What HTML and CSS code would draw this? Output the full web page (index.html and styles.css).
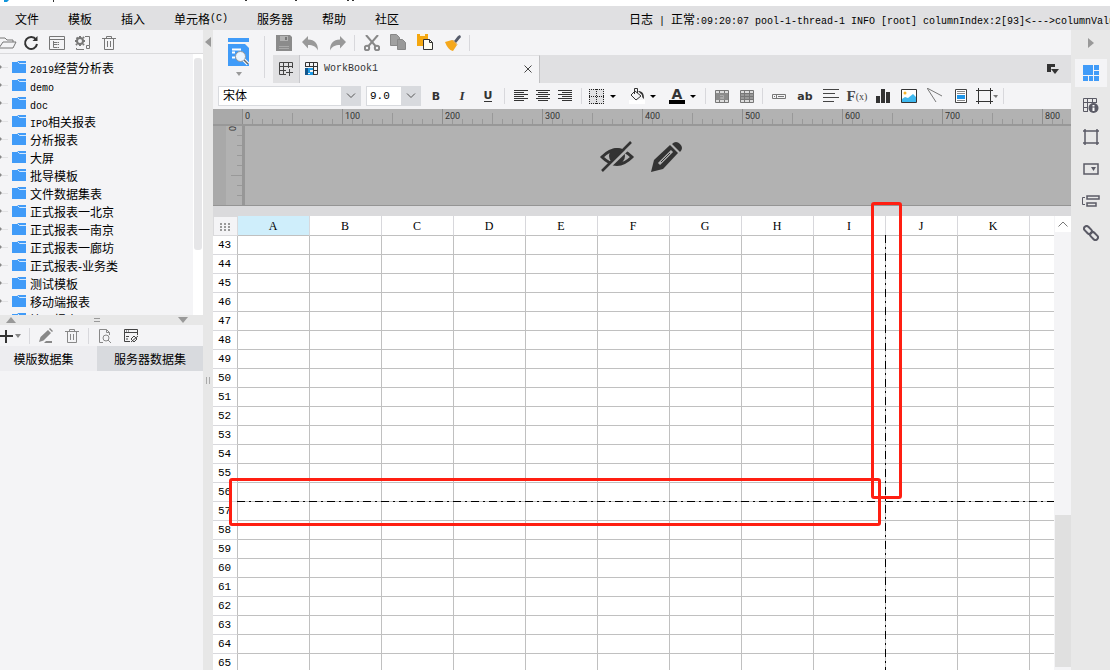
FILE: index.html
```html
<!DOCTYPE html>
<html lang="zh-CN">
<head>
<meta charset="utf-8">
<title>WorkBook1</title>
<link rel="stylesheet" href="styles.css">
</head>
<body>
<div class="app">
  <div class="titlebar">
    <svg width="400" height="3" aria-hidden="true"><path d="M4 0h5l-2 2H4z" fill="#1296db"/><path d="M53 0h1v2h-1zM245 0h2v1h-2zM295 0h2v1h-2zM347 0h2v1h-2zM352 0h2v1h-2z" fill="#333"/></svg>
  </div>
  <header class="menubar">
    <nav class="menus">
      <button>文件</button><button>模板</button><button>插入</button><button>单元格<span class="latin">(C)</span></button><button>服务器</button><button>帮助</button><button>社区</button>
    </nav>
    <div class="log">日志<span class="latin"> | </span>正常<span class="latin">:09:20:07 pool-1-thread-1 INFO [root] columnIndex:2[93]&lt;---&gt;columnValue</span></div>
  </header>

  <div class="body">
    <aside class="left">
      <div class="bar file-bar">
        <button aria-label="打开"><svg width="20" height="16" fill="none" stroke="#777"><path d="M1 13V3h6l2 2h6v2M1 13l4-6h13l-3 6z"/></svg></button>
        <button aria-label="刷新"><svg width="16" height="16" fill="none" stroke="#333" stroke-width="2"><path d="M13 4.500A6 6 0 1 0 14 9"/><path d="M14.500 1v5h-5z" fill="#333" stroke="none"/></svg></button>
        <button aria-label="目录"><svg width="18" height="16" fill="none" stroke="#777"><path d="M1.500 1.500h15v13h-15zM1.500 4.500h15M5.500 6v6.500M5.500 7.500h4M5.500 9.500h4M5.500 12.500h4M10 7.500h1M10 9.500h1M10 12.500h1"/></svg></button>
        <button aria-label="设置"><svg width="18" height="16" fill="none" stroke="#777"><circle cx="6" cy="6" r="3" stroke-width="2"/><path d="M6 1v2M6 9v2M1 6h2M9 6h2M2.500 2.500l1 1M9 9l1 1M9 3l1-1M2 10l1-1" stroke-width="2"/><path d="M11 1.500h4.500v9M2.500 13v1.500H10M12.500 10.500h3v3h-3z"/></svg></button>
        <button aria-label="删除"><svg width="16" height="16" fill="none" stroke="#777"><path d="M1 3.500h14M5.500 3V1.500h5V3M3.500 4v10.500h9V4M6.500 6v6M9.500 6v6"/></svg></button>
      </div>
      <div class="tree-wrap">
        <ul class="tree" id="tree"></ul>
        <div class="tree-scroll"><div class="tree-thumb"></div></div>
      </div>
      <div class="splitter">
        <svg width="10" height="6"><path d="M0 6l5-6 5 6z" fill="#999"/></svg>
        <svg width="6" height="4"><path d="M0 .5h6M0 3.500h6" stroke="#999"/></svg>
        <svg width="10" height="6"><path d="M0 0h10L5 6z" fill="#999"/></svg>
      </div>
      <div class="bar data-bar">
        <button aria-label="新增"><svg width="22" height="16"><path d="M0 8h13M6 2v13" stroke="#333" stroke-width="2"/><path d="M15 6h6l-3 4z" fill="#888"/></svg></button>
        <i class="sep"></i>
        <button aria-label="编辑"><svg width="16" height="16"><path d="M1 14l1.500-5L10 2l3 3-7.500 7.500zM11 1l1-1 3 3-1 1zM8 13h6v2H6z" fill="#888"/></svg></button>
        <button aria-label="删除数据集"><svg width="16" height="16" fill="none" stroke="#888"><path d="M1 3.500h14M5.500 3V1.500h5V3M3.500 4v10.500h9V4M6.500 6v6M9.500 6v6"/></svg></button>
        <i class="sep"></i>
        <button aria-label="预览"><svg width="16" height="16" fill="none" stroke="#888"><path d="M6 14.500H2.500v-13h7l3 3V7M9.500 1.500v3h3"/><circle cx="9" cy="10" r="3"/><path d="M11 12l3 3"/></svg></button>
        <button aria-label="连接"><svg width="16" height="16" fill="none" stroke="#444"><path d="M7 13.500H1.500v-12h13V7M1.500 4.500h13M3 8.500h3M3 11h2M3 3h1M5 3h1"/><path d="M8 11l3-3 3 3-3 3zM8 14l7-6"/></svg></button>
      </div>
      <div class="data-tabs"><button>模版数据集</button><button class="chosen">服务器数据集</button></div>
    </aside>

    <div class="divider">
      <svg width="6" height="10"><path d="M6 0v10L0 5z" fill="#999"/></svg>
      <svg width="4" height="7"><path d="M.5 0v7M3.500 0v7" stroke="#aaa"/></svg>
    </div>

    <main class="main">
      <div class="top">
        <button class="preview-btn" aria-label="预览模板">
          <svg width="22" height="28"><path d="M0 0h21v4H0zM0 6h17l4 4v18H0z" fill="#409bf8"/><path d="M4 11.500h9M4 14.500h3M4 19.500h3" stroke="#fff" stroke-width="2"/><circle cx="12.500" cy="18.500" r="5" fill="#eaf4ff" stroke="#999"/><path d="M16 22l4 4" stroke="#fff" stroke-width="3.500"/><path d="M16 22l4 4" stroke="#666" stroke-width="1.500"/></svg>
          <svg width="6" height="4"><path d="M0 0h6L3 4z" fill="#999"/></svg>
        </button>
        <div class="top-right">
          <div class="edit-bar">
            <button aria-label="保存"><svg width="16" height="16"><path d="M0 0h14l2 2v14H0z" fill="#8b8b8b"/><path d="M4 1h8v5H4z" fill="#b2b2b2"/><path d="M9 2h2v3H9z" fill="#777"/><path d="M3 11.500h10M3 13.500h10" stroke="#aaa"/></svg></button>
            <button aria-label="撤销"><svg width="17" height="16"><path d="M6 1v3.500c7 0 10 4 10 11-2-4-5-5.500-10-5.500v3.500L0 7z" fill="#999"/></svg></button>
            <button aria-label="重做"><svg width="17" height="16"><path d="M11 1v3.500C4 4.500 1 8.500 1 15.500c2-4 5-5.500 10-5.500v3.500L17 7z" fill="#999"/></svg></button>
            <i class="sep"></i>
            <button aria-label="剪切"><svg width="16" height="16" fill="none" stroke="#888" stroke-width="2"><circle cx="3" cy="13" r="2.200"/><circle cx="13" cy="13" r="2.200"/><path d="M2 0l9.500 11M14 0L4.500 11"/></svg></button>
            <button aria-label="复制"><svg width="17" height="17" stroke="#888"><path d="M.5.5h6l3 3v8h-9z" fill="#a0a0a0"/><path d="M7.500 5.500h5l3 3v7h-8z" fill="#999"/></svg></button>
            <button aria-label="粘贴"><svg width="17" height="17"><path d="M0 0h11v12H0z" fill="#f5a70f"/><path d="M3 0h5v2H3z" fill="#fff3d8"/><path d="M6.500 5.500h6l3 3v7h-9z" fill="#fffdf2" stroke="#333"/><path d="M12.500 5.500v3h3" fill="none" stroke="#333"/></svg></button>
            <button aria-label="格式刷"><svg width="16" height="16"><path d="M9 6l4-5 2-1 1 2-5 6z" fill="#555b6b"/><path d="M0 7l7-2 5 5-4 6c-4-1-6-4-8-9z" fill="#f5a81c"/><path d="M7.500 5l4.500 4.500" stroke="#d98a10"/></svg></button>
            <i class="sep"></i>
          </div>
          <div class="tabs">
            <button class="new-tab" aria-label="新建"><svg width="15" height="14" fill="none" stroke="#444"><path d="M13.500 6V.5H.5v12H7M.5 4.500h13M.5 8.500H7M4.500.5v12M9.500.5V6M10.500 7v7M7 10.500h7"/></svg></button>
            <div class="tab">
              <svg width="14" height="14"><path d="M.5 5V.5h12v12H8M.5 4.500h12M8 8.500h4.500M4.500.5v4M8.500.5v12" fill="none" stroke="#333"/><path d="M0 6h3v7H0z" fill="#14568c"/><path d="M3 6h5v2H5v2h3v3H3v-1h2v-1H3z" fill="#1c9be6"/></svg>
              <span class="tab-name">WorkBook1</span>
              <button aria-label="关闭"><svg width="8" height="8"><path d="M.5.5l7 7M7.500.5l-7 7" stroke="#444"/></svg></button>
            </div>
            <button class="tab-list" aria-label="标签列表"><svg width="12" height="10"><path d="M0 0h8v3H4v5H0z" fill="#333"/><path d="M4 5h8L8 10z" fill="#333"/></svg></button>
          </div>
        </div>
      </div>

      <div class="format-bar">
        <div class="combo font-combo"><select aria-label="字体"><option>宋体</option></select><svg width="10" height="6" fill="none" stroke="#555"><path d="M1 .5l4 4 4-4"/></svg></div>
        <div class="combo size-combo"><select aria-label="字号"><option>9.0</option></select><svg width="10" height="6" fill="none" stroke="#555"><path d="M1 .5l4 4 4-4"/></svg></div>
        <div class="group letters">
          <button class="letter"><b>B</b></button><button class="letter italic"><b>I</b></button><button class="letter"><b class="under">U</b></button>
        </div>
        <i class="sep"></i>
        <div class="group small">
          <button aria-label="左对齐"><svg width="14" height="12" stroke="#333"><path d="M0 .5h14M0 2.500h10M0 4.500h14M0 6.500h10M0 8.500h14M0 10.500h10"/></svg></button>
          <button aria-label="居中"><svg width="14" height="12" stroke="#333"><path d="M0 .5h14M2 2.500h10M0 4.500h14M2 6.500h10M0 8.500h14M2 10.500h10"/></svg></button>
          <button aria-label="右对齐"><svg width="14" height="12" stroke="#333"><path d="M0 .5h14M4 2.500h10M0 4.500h14M4 6.500h10M0 8.500h14M4 10.500h10"/></svg></button>
        </div>
        <i class="sep"></i>
        <div class="group drops">
          <button aria-label="边框"><svg width="15" height="15"><path d="M0 0h15v15H0z" fill="#e2e2e4"/><path d="M0 .5h15M0 14.500h15M.5 0v15M14.500 0v15M7.500 0v15M0 7.500h15" stroke="#222" stroke-dasharray="1 1"/></svg><svg width="6" height="3"><path d="M0 0h6L3 3z"/></svg></button>
          <button aria-label="背景色"><svg width="16" height="16"><path d="M0 12h16v4H0z" fill="#fff"/><path d="M6 3l6 5-5 4-5-5zM5.500 6V.5h3V5" fill="none" stroke="#333"/><path d="M9 3c4 0 6 2 6 8-2-1-2-3-2-4z" fill="#333"/></svg><svg width="6" height="3"><path d="M0 0h6L3 3z"/></svg></button>
          <button aria-label="文字颜色"><span class="color-a">A</span><svg width="6" height="3"><path d="M0 0h6L3 3z"/></svg></button>
        </div>
        <i class="sep"></i>
        <div class="group pair">
          <button aria-label="合并单元格"><svg width="14" height="13"><path d="M.5.5h13v12H.5z" fill="#ddd" stroke="#777"/><path d="M1 3h12v7H1z" fill="#8b8b8b"/><path d="M4.500 0v3M9.500 0v3M4.500 10v3M9.500 10v3" stroke="#777"/><path d="M5 5.500h3.500V9M8 8.500H5.500v-1H8" fill="none" stroke="#aaa"/></svg></button>
          <button aria-label="取消合并"><svg width="14" height="13"><path d="M.5.5h13v12H.5z" fill="#ddd" stroke="#777"/><path d="M1 4h12v5H1z" fill="#999"/><path d="M4.500 0v13M9.500 0v13M0 3.500h14M0 6.500h14M0 9.500h14" stroke="#777"/></svg></button>
        </div>
        <i class="sep"></i>
        <div class="group">
          <button aria-label="单元格元素"><svg width="14" height="5" fill="none" stroke="#777"><path d="M.5.5h13v4H.5zM4.500 1v3M2 2.500h1M6 2.500h6"/></svg></button>
          <button class="letter"><b>ab</b></button>
          <button aria-label="富文本"><svg width="16" height="14" stroke="#444"><path d="M0 .5h16M0 4.500h12M0 8.500h16M0 12.500h11"/></svg></button>
          <button class="fx" aria-label="公式">F<span>(x)</span></button>
          <button aria-label="图表"><svg width="14" height="14"><path d="M0 7h4v7H0zM5 0h4v14H5zM10 3h4v11h-4z" fill="#333"/></svg></button>
          <button aria-label="图片"><svg width="16" height="14"><path d="M.5.5h15v13H.5z" fill="#fff" stroke="#333"/><circle cx="4" cy="4" r="1.500" fill="#f5b32a"/><path d="M1 10l3-2 3 1 5-4 3 3v5H1z" fill="#3db8ef"/></svg></button>
          <button aria-label="斜线"><svg width="16" height="16" fill="none" stroke="#777"><path d="M0 0l15 8M0 0l9 14"/></svg></button>
          <button aria-label="子报表"><svg width="12" height="14"><path d="M.5.5h11v13H.5z" fill="#fff" stroke="#444"/><path d="M2 2.500h8M2 4.500h8M2 11.500h8" stroke="#888"/><path d="M2 6h8v4H2z" fill="#2196e8"/></svg></button>
          <button aria-label="悬浮元素"><svg width="22" height="16" fill="none" stroke="#333"><path d="M2.500 0v16M14.500 0v16M0 2.500h17M0 13.500h17"/><path d="M17 7h5l-2 3z" fill="#777" stroke="none"/></svg></button>
        </div>
        <i class="sep"></i>
      </div>

      <div class="ruler"><div class="ruler-corner"></div><div class="ticks"><span>0</span><span>100</span><span>200</span><span>300</span><span>400</span><span>500</span><span>600</span><span>700</span><span>800</span></div></div>
      <div class="canvas">
        <div class="v-ruler"><span>0</span></div>
        <div class="canvas-area">
          <button aria-label="隐藏"><svg width="34" height="32"><path d="M2 17Q17 2 32 17Q17 32 2 17z" fill="none" stroke="#333" stroke-width="3"/><circle cx="17" cy="16" r="8" fill="#333"/><path d="M5 31L33 4" stroke="#b2b2b2" stroke-width="3"/><path d="M2 31L31 2" stroke="#333" stroke-width="2.500"/></svg></button>
          <button aria-label="编辑页眉"><svg width="32" height="32"><path d="M0 32l3-12L19 5l8 8-15 16z" fill="#333"/><path d="M8 24L21 11" stroke="#b2b2b2" stroke-width="3"/><path d="M10 22L19 13" stroke="#333" stroke-width="1"/><path d="M21 4q4-4 8 0t0 8z" fill="#333"/></svg></button>
        </div>
      </div>

      <section class="sheet">
        <div class="grid">
          <table>
            <colgroup><col class="num-col"><col span="11" class="data-col"><col></colgroup>
            <thead><tr><th class="corner" aria-label="全选"><svg width="11" height="9" fill="#999"><path d="M0 0h2v2H0zM4 0h2v2H4zM8 0h2v2H8zM0 3h2v2H0zM4 3h2v2H4zM8 3h2v2H8zM0 6h2v2H0zM4 6h2v2H4zM8 6h2v2H8z"/></svg></th><th class="active">A</th><th>B</th><th>C</th><th>D</th><th>E</th><th>F</th><th>G</th><th>H</th><th>I</th><th>J</th><th>K</th><th></th></tr></thead>
            <tbody id="rows"></tbody>
          </table>
          <div class="page-line across"></div>
          <div class="page-line down"></div>
        </div>
        <div class="sheet-scroll">
          <button aria-label="向上滚动"><svg width="10" height="6" fill="none" stroke="#777"><path d="M.5 5.500L5 1l4.500 4.500"/></svg></button>
          <div class="sheet-thumb"></div>
        </div>
        <div class="mark mark-column"></div>
        <div class="mark mark-row"></div>
      </section>
    </main>

    <aside class="right">
      <button class="collapse" aria-label="收起"><svg width="6" height="10"><path d="M0 0v10l6-5z" fill="#999"/></svg></button>
      <button class="chosen" aria-label="单元格元素"><svg width="16" height="16" fill="#409bf8"><path d="M0 0h10v10H0zM11 0h5v5h-5zM11 6h5v4h-5zM0 11h5v5H0zM6 11h4v5H6zM11 11h5v5h-5z"/></svg></button>
      <button aria-label="单元格属性"><svg width="17" height="17" fill="none" stroke="#5b5b66"><path d="M6 14.500H1.500v-13h13V6M1 5.500h13M1 10.500h5M5.500 1v14M10.500 1v5"/><circle cx="11.500" cy="11" r="5" fill="#5b5b66" stroke="none"/><path d="M11.500 8v1.500M11.500 10.500V14" stroke="#fff" stroke-width="2"/></svg></button>
      <button aria-label="悬浮元素"><svg width="16" height="16" fill="none" stroke="#5b5b66"><path d="M0 2h16M0 14h16M2 0v16M14 0v16" stroke-width="1.500"/></svg></button>
      <button aria-label="控件设置"><svg width="16" height="12"><path d="M1 1h14v10H1z" fill="none" stroke="#5b5b66" stroke-width="1.500"/><path d="M8 4h5l-2.500 4z" fill="#5b5b66"/></svg></button>
      <button aria-label="条件属性"><svg width="18" height="12" fill="none" stroke="#5b5b66"><path d="M3 2.500H.5v7H3"/><path d="M5 1h12v3H5zM5 8h9v3H5z" stroke-width="1.500"/></svg></button>
      <button aria-label="超级链接"><svg width="16" height="16" fill="none" stroke="#5b5b66" stroke-width="2"><rect x="-4.500" y="-2.500" width="9" height="5" rx="2.500" transform="translate(5 5) rotate(45)"/><rect x="-4.500" y="-2.500" width="9" height="5" rx="2.500" transform="translate(11 11) rotate(45)"/></svg></button>
    </aside>
  </div>
</div>
<script src="app.js"></script>
</body>
</html>
```
FILE: styles.css
```css
* { box-sizing: border-box; }

body {
  margin: 0;
  font-family: "Liberation Sans", "Noto Sans CJK SC", sans-serif;
  font-size: 12px;
  color: #000;
}

button {
  display: flex;
  align-items: center;
  justify-content: center;
  padding: 0;
  border: 0;
  background: none;
  font: inherit;
  color: inherit;
  white-space: nowrap;
}

svg { display: block; flex: none; }

.app {
  display: flex;
  flex-direction: column;
  height: 100vh;
  overflow: hidden;
}

.titlebar { height: 6px; flex: none; background: #fff; }

.latin {
  font-family: "Liberation Mono", monospace;
  font-size: 10px;
  white-space: pre;
}

.menubar {
  display: flex;
  justify-content: space-between;
  align-items: center;
  flex: none;
  height: 24px;
  padding-left: 15px;
  background: #e0e0e2;
  overflow: hidden;
}

.menus { display: flex; gap: 29px; }
.log { flex: 0 0 481px; overflow: hidden; white-space: nowrap; }

.body { display: flex; flex: 1; min-height: 0; }

/* Left panel */
.left {
  display: flex;
  flex-direction: column;
  flex: 0 0 203px;
  min-width: 0;
  background: #f4f4f6;
}

.bar { display: flex; align-items: center; flex: none; overflow: hidden; }
.bar button { width: 26px; height: 22px; flex: none; }
.file-bar { height: 24px; padding-top: 2px; border-bottom: 1px solid #dadadc; }
.file-bar button:first-child { width: 18px; justify-content: flex-end; }
.data-bar { height: 21px; }
.data-bar button:first-child { width: 22px; margin-right: 4px; }

.sep {
  flex: 0 0 1px;
  height: 16px;
  margin: 0 3px;
  background: #d8d8dc;
}

.tree-wrap { display: flex; flex: 0 0 261px; overflow: hidden; }
.tree { flex: 1; margin: 0; padding: 5px 0 0; list-style: none; }
.tree li {
  display: flex;
  align-items: flex-start;
  gap: 4px;
  height: 18px;
  line-height: 20px;
  white-space: nowrap;
}
.tree-scroll { flex: 0 0 10px; padding: 4px 1px; background: #fff; }
.tree-thumb { height: 192px; border-radius: 3px; background: #e6e6e8; }

.splitter {
  display: flex;
  align-items: center;
  justify-content: space-between;
  flex: 0 0 10px;
  padding: 0 15px 0 6px;
  background: #e7e7e7;
}

.data-tabs { display: grid; grid-template-columns: 97fr 106fr; flex: none; height: 25px; }
.data-tabs button { padding-right: 10px; background: #ededf0; }
.data-tabs .chosen { padding: 0; background: #d8dade; }

.divider {
  display: flex;
  flex-direction: column;
  align-items: center;
  gap: 330px;
  flex: 0 0 10px;
  padding-top: 7px;
  background: #e7e7e7;
}

/* Main area */
.main {
  display: flex;
  flex-direction: column;
  flex: 1;
  min-width: 0;
  background: #f4f4f6;
}

.top { display: flex; flex: 0 0 53px; }
.preview-btn {
  flex: 0 0 52px;
  flex-direction: column;
  gap: 6px;
  height: 42px;
  margin: 6px 8px 0 0;
  border-right: 1px solid #d8d8dc;
}
.top-right { flex: 1; min-width: 0; }
.edit-bar { display: flex; align-items: center; height: 25px; }
.edit-bar button { width: 27px; height: 24px; }
.edit-bar button:first-child { width: 24px; }
.edit-bar button:first-child { justify-content: flex-start; padding-left: 3px; }
.tabs { display: flex; height: 28px; background: #e0e0e2; }
.new-tab { width: 27px; border-right: 1px solid #c8c8cc; }
.tab {
  display: flex;
  align-items: center;
  width: 240px;
  padding: 0 7px 2px 5px;
  border-top: 1px solid #e0e0e2;
  border-right: 1px solid #c0c0c2;
  background: #f4f4f6;
}
.tab-name {
  flex: 1;
  padding-left: 5px;
  font-family: "Liberation Mono", monospace;
  font-size: 10px;
  color: #333;
}
.tab-list { margin-left: auto; width: 36px; }

.format-bar {
  display: flex;
  align-items: center;
  flex: 0 0 26px;
  padding-left: 5px;
}
.combo {
  display: grid;
  align-items: center;
  height: 20px;
  border: 1px solid #d8dade;
  background: linear-gradient(#d8dade, #d8dade) right / 19px 100% no-repeat #fff;
}
.combo > * { grid-area: 1 / 1; }
.combo select {
  appearance: none;
  width: 100%;
  height: 18px;
  padding: 0 4px;
  border: 0;
  background: none;
  font: inherit;
  color: #000;
}
.combo svg { justify-self: end; margin-right: 4px; pointer-events: none; }
.font-combo { width: 143px; margin-right: 5px; }
.size-combo { width: 55px; }
.size-combo select { font-family: "Liberation Mono", monospace; font-size: 11px; padding: 0 3px; }

.group { display: flex; }
.group button { width: 26px; height: 22px; }
.letters { padding-left: 2px; }
.small { padding: 0 2px; }
.small button { width: 22px; }
.drops { gap: 7px; padding: 0 2px; }
.drops button { width: 33px; justify-content: space-between; padding: 0 4px 0 2px; }
.pair button { width: 25px; }
.letter { font-family: "DejaVu Sans", sans-serif; font-size: 11px; color: #333; }
.italic { font-family: "Liberation Serif", serif; font-style: italic; font-size: 13px; }
.under { line-height: 11px; border-bottom: 1px solid #333; }
.color-a {
  width: 16px;
  border-bottom: 4px solid #000;
  font: bold 14px/12px "DejaVu Sans", sans-serif;
  color: #333;
}
.fx { font: bold 15px "Liberation Serif", serif; color: #444; }
.fx span { font-size: 10px; font-weight: normal; }

/* Rulers */
.ruler { display: flex; flex: 0 0 17px; border-bottom: 2px solid #989898; background: #b2b2b2; }
.ruler-corner { flex: 0 0 29px; background: #a9a9a9; }
.ticks {
  display: flex;
  flex: 1;
  min-width: 0;
  overflow: hidden;
  background:
    repeating-linear-gradient(90deg, #8e8e8e 0 1px, transparent 1px 100px) 0 0 / 100% 100%,
    repeating-linear-gradient(90deg, transparent 0 50px, #999 50px 51px, transparent 51px 100px) 0 100% / 100% 11px no-repeat,
    repeating-linear-gradient(90deg, #999 0 1px, transparent 1px 10px) 0 100% / 100% 5px no-repeat;
}
.ticks span {
  flex: 0 0 100px;
  padding-left: 3px;
  font: 9px/14px Roboto, sans-serif;
  color: #333;
}

.canvas { display: flex; flex: 0 0 80px; border-bottom: 1px solid #949494; background: #b2b2b2; }
.v-ruler {
  flex: 0 0 32px;
  padding-left: 14px;
  border-right: 3px solid #979797;
  font: 9px/10px Roboto, sans-serif;
  color: #333;
  background:
    repeating-linear-gradient(transparent 0 9px, #999 9px 10px) 24px 0 / 5px 100% no-repeat,
    linear-gradient(#999, #999) 18px 49px / 11px 1px no-repeat,
    linear-gradient(90deg, #a9a9a9 13px, #b2b2b2 13px);
}
.v-ruler span { display: block; width: 10px; height: 10px; line-height: 10px; writing-mode: vertical-rl; }
.canvas-area {
  display: flex;
  flex: 1;
  justify-content: center;
  align-items: flex-start;
  gap: 17px;
  padding: 14px 34px 0 0;
}

/* Sheet */
.sheet {
  position: relative;
  display: flex;
  flex: 1;
  min-height: 0;
  border-top: 10px solid #dadadc;
}
.grid { position: relative; flex: 1; min-width: 0; overflow: hidden; background: #fff; }
table { width: 100%; table-layout: fixed; border-collapse: separate; border-spacing: 0; }
.num-col { width: 25px; }
.data-col { width: 72px; }
th, td {
  height: 19px;
  padding: 0;
  border-right: 1px solid #c0c0c0;
  border-bottom: 1px solid #c0c0c0;
  font-weight: normal;
  line-height: 18px;
}
thead th {
  height: 20px;
  padding: 1px 1px 0 0;
  border-right-color: #d8d8dc;
  font-family: "Liberation Serif", serif;
  font-size: 12px;
}
tbody th {
  padding-right: 1px;
  border-bottom-color: #d8d8dc;
  font-family: "Liberation Mono", monospace;
  font-size: 11px;
}
th:last-child, td:last-child { border-right: 0; }
.corner { border: 1px solid #dadadc; background: #f4f4f6; }
.corner svg { margin: 2px auto 0; }
.active { background: #cfeefb; }

.page-line { position: absolute; }
.across {
  left: 24px;
  right: 0;
  top: 285px;
  height: 1px;
  background: repeating-linear-gradient(90deg, #000 0 8px, #c0c0c0 8px 12px, #000 12px 14px, #c0c0c0 14px 18px);
}
.down {
  left: 672px;
  top: 19px;
  bottom: 0;
  width: 1px;
  background: repeating-linear-gradient(#000 0 8px, #c0c0c0 8px 12px, #000 12px 14px, #c0c0c0 14px 18px);
}

.sheet-scroll {
  display: flex;
  flex-direction: column;
  justify-content: space-between;
  flex: 0 0 17px;
  padding: 0 0 3px 1px;
  background: #f4f4f6;
}
.sheet-scroll button { height: 16px; background: #fff; }
.sheet-thumb { height: 152px; background: #e0e0e0; }

.mark { position: absolute; border: 3px solid #ff1f12; border-radius: 3px; }
.mark-column { left: 658px; top: -14px; width: 31px; height: 297px; }
.mark-row { left: 16px; top: 262px; width: 652px; height: 48px; }

/* Right panel */
.right {
  display: flex;
  flex-direction: column;
  align-items: center;
  gap: 4px;
  flex: 0 0 39px;
  background: #e8e8e8;
}
.right button { width: 32px; height: 28px; }
.right .collapse { height: 25px; }
.right .chosen { background: #f4f4f6; }
```
FILE: app.js
```js
// Each folder name is split into [latin, chinese] parts.
const folders = [
  ["2019", "经营分析表"], ["demo", ""], ["doc", ""], ["IPO", "相关报表"],
  ["", "分析报表"], ["", "大屏"], ["", "批导模板"], ["", "文件数据集表"],
  ["", "正式报表一北京"], ["", "正式报表一南京"], ["", "正式报表一廊坊"],
  ["", "正式报表-业务类"], ["", "测试模板"], ["", "移动端报表"], ["", "管理报表"]
];
const folderIcon = '<svg width="26" height="16"><path d="M0 6l2 2-2 2z" fill="#888"/><path d="M2 8.500h6" stroke="#e2e2e4"/><path d="M12 3h5l1-1h8v12H12z" fill="#409bf8"/><path d="M17.500 2.500l2 2H26" fill="none" stroke="#d5e9fd"/></svg>';
document.getElementById("tree").innerHTML = folders.map(([latin, name]) =>
  `<li>${folderIcon}<div><span class="latin">${latin}</span>${name}</div></li>`).join("");

let rows = "";
for (let n = 43; n <= 65; n++) {
  rows += `<tr><th>${n}</th>${"<td></td>".repeat(12)}</tr>`;
}
document.getElementById("rows").innerHTML = rows;
```
